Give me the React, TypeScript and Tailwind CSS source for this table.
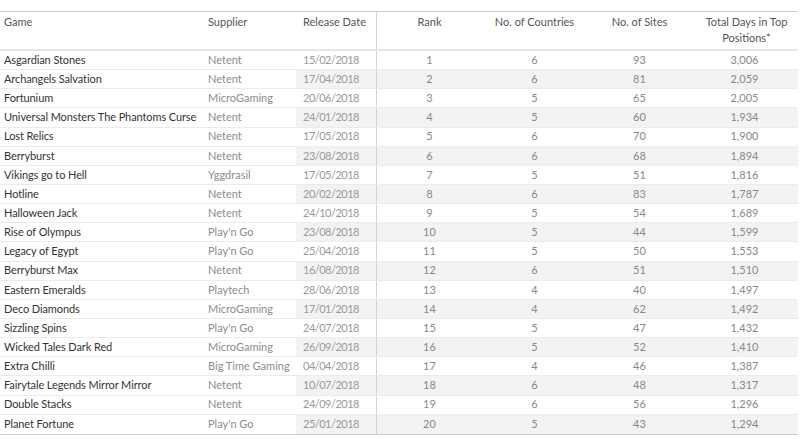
const rows = [
  ["Asgardian Stones", "Netent", "15/02/2018", "1", "6", "93", "3,006"],
  ["Archangels Salvation", "Netent", "17/04/2018", "2", "6", "81", "2,059"],
  ["Fortunium", "MicroGaming", "20/06/2018", "3", "5", "65", "2,005"],
  ["Universal Monsters The Phantoms Curse", "Netent", "24/01/2018", "4", "5", "60", "1,934"],
  ["Lost Relics", "Netent", "17/05/2018", "5", "6", "70", "1,900"],
  ["Berryburst", "Netent", "23/08/2018", "6", "6", "68", "1,894"],
  ["Vikings go to Hell", "Yggdrasil", "17/05/2018", "7", "5", "51", "1,816"],
  ["Hotline", "Netent", "20/02/2018", "8", "6", "83", "1,787"],
  ["Halloween Jack", "Netent", "24/10/2018", "9", "5", "54", "1,689"],
  ["Rise of Olympus", "Play'n Go", "23/08/2018", "10", "5", "44", "1,599"],
  ["Legacy of Egypt", "Play'n Go", "25/04/2018", "11", "5", "50", "1,553"],
  ["Berryburst Max", "Netent", "16/08/2018", "12", "6", "51", "1,510"],
  ["Eastern Emeralds", "Playtech", "28/06/2018", "13", "4", "40", "1,497"],
  ["Deco Diamonds", "MicroGaming", "17/01/2018", "14", "4", "62", "1,492"],
  ["Sizzling Spins", "Play'n Go", "24/07/2018", "15", "5", "47", "1,432"],
  ["Wicked Tales Dark Red", "MicroGaming", "26/09/2018", "16", "5", "52", "1,410"],
  ["Extra Chilli", "Big Time Gaming", "04/04/2018", "17", "4", "46", "1,387"],
  ["Fairytale Legends Mirror Mirror", "Netent", "10/07/2018", "18", "6", "48", "1,317"],
  ["Double Stacks", "Netent", "24/09/2018", "19", "6", "56", "1,296"],
  ["Planet Fortune", "Play'n Go", "25/01/2018", "20", "5", "43", "1,294"],
];

export default function App() {
  return (
    <div className="w-[800px] h-[439px] bg-white pt-[11px] font-['Lato','Liberation_Sans',sans-serif] text-[11px] overflow-hidden">
      <div className="w-[798px] border-t border-[#cfcfcf] border-b">
        {/* header */}
        <div className="flex h-[39px] border-b-2 border-[#e6e6e6] text-[#555]">
          <div className="w-[208px] pl-[4px] pt-[2px]">Game</div>
          <div className="w-[88px] pt-[2px]">Supplier</div>
          <div className="w-[80px] pl-[7px] pt-[2px]">Release Date</div>
          <div className="flex flex-1 border-l border-[#d4d4d4]">
            <div className="w-[105px] text-center pt-[2px]">Rank</div>
            <div className="w-[105px] text-center pt-[2px]">No. of Countries</div>
            <div className="w-[105px] text-center pt-[2px]">No. of Sites</div>
            <div className="w-[105px] text-center pt-[2px] pl-[4px] leading-[16px]">
              Total Days in Top
              <br />
              Positions*
            </div>
          </div>
        </div>

        {/* rows */}
        {rows.map((r, i) => {
          const band = i % 2 === 1;
          return (
            <div key={r[0]} className="flex h-[19.15px] items-center border-b border-[#ebebeb] last:border-b-0">
              <div className="w-[208px] pl-[4px] text-[#333] tracking-[-0.1px] whitespace-nowrap">{r[0]}</div>
              <div className="w-[88px] text-[#8c8c8c] whitespace-nowrap">{r[1]}</div>
              <div
                className={`w-[80px] h-full flex items-center pl-[7px] text-[#9a9a9a] tracking-[-0.5px] ${
                  band ? "bg-[#f3f3f3]" : ""
                }`}
              >
                {r[2]}
              </div>
              <div
                className={`flex flex-1 h-full items-center border-l border-[#d4d4d4] text-[#888] ${
                  band ? "bg-[#f3f3f3]" : ""
                }`}
              >
                <div className="w-[105px] text-center">{r[3]}</div>
                <div className="w-[105px] text-center">{r[4]}</div>
                <div className="w-[105px] text-center">{r[5]}</div>
                <div className="w-[105px] text-center">{r[6]}</div>
              </div>
            </div>
          );
        })}
      </div>
    </div>
  );
}
